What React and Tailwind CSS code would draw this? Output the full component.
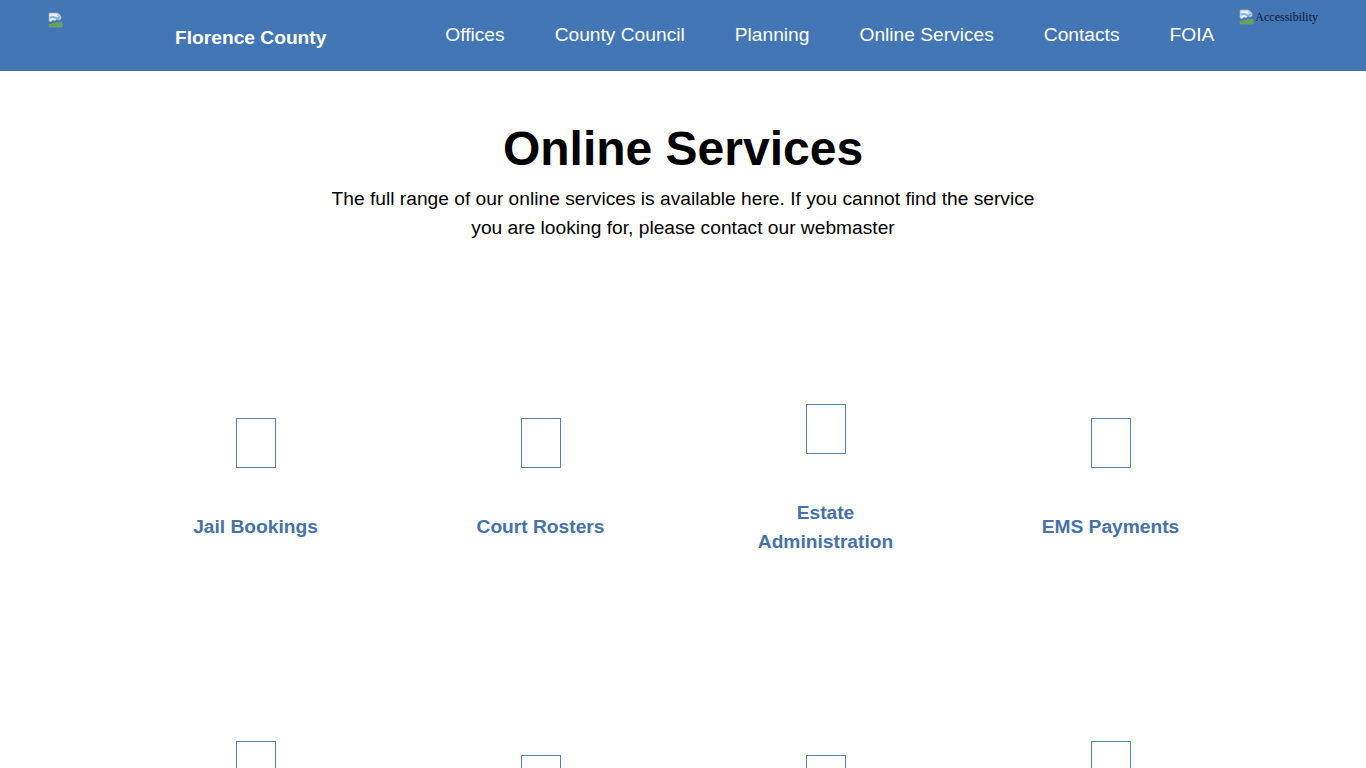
import React from "react";

function BrokenImg() {
  return (
    <svg width="16" height="16" viewBox="0 0 16 16" className="shrink-0">
      <path d="M1 1h9l3 3v3l-2 1-2-1-2 2-2-1-2 2-2-1z" fill="#e8eef5" stroke="#9aa7b4" strokeWidth="0.8" />
      <path d="M2 6c2-2 4-1 6 0 2 1 3 0 4-1" fill="none" stroke="#7fb7e8" strokeWidth="2" />
      <path d="M1 15v-3l2 1 2-2 2 1 2-2 2 1 2-1 1 1v4z" fill="#5da843" stroke="#8aa08a" strokeWidth="0.6" />
      <path d="M10 1v3h3" fill="none" stroke="#9aa7b4" strokeWidth="0.8" />
    </svg>
  );
}

const services = [
  "Jail Bookings",
  "Court Rosters",
  "Estate Administration",
  "EMS Payments",
  "Tax Payments Online",
  "Employment",
  "Bids",
  "Public Records Search",
];

function Card({ title }) {
  return (
    <div className="h-[337px] flex flex-col items-center justify-center">
      <div className="w-[40px] h-[50px] border border-[#5b7fae]" />
      <div className="mt-[44px] w-[170px] text-center text-[19.2px] leading-[29px] font-bold text-[#4672a8]">
        {title}
      </div>
    </div>
  );
}

export default function App() {
  const nav = ["Offices", "County Council", "Planning", "Online Services", "Contacts", "FOIA"];
  return (
    <div className="min-h-screen bg-white" style={{ fontFamily: '"Liberation Sans", Arial, sans-serif' }}>
      <header className="h-[71px] bg-[#4276b4] border-b border-[#3d6ea8] flex items-start">
        <div className="pl-[48px] pt-[12px]">
          <BrokenImg />
        </div>
        <div className="ml-[111px] mt-[25px] text-white font-bold text-[19.2px] leading-[26px]">Florence County</div>
        <nav className="ml-auto flex items-start pt-[22px]">
          {nav.map((n) => (
            <a key={n} className="px-[25px] text-white text-[19.2px] leading-[26px]">
              {n}
            </a>
          ))}
        </nav>
        <div className="mr-[48px] pt-[9px] flex items-start">
          <BrokenImg />
          <span className="text-[12px] leading-[16px] text-[#0b1a3a]" style={{ fontFamily: '"Liberation Serif", serif' }}>
            Accessibility
          </span>
        </div>
      </header>
      <main>
        <h1 className="text-center font-bold text-[48px] leading-[56px] text-black mt-[50px]">Online Services</h1>
        <p className="mx-auto mt-[7px] max-w-[720px] text-center text-[19.2px] leading-[29px] text-black">
          The full range of our online services is available here. If you cannot find the service you are looking for, please contact our webmaster
        </p>
        <div className="mx-auto w-[1140px] grid grid-cols-4 mt-[69px]">
          {services.map((s) => (
            <Card key={s} title={s} />
          ))}
        </div>
      </main>
    </div>
  );
}
